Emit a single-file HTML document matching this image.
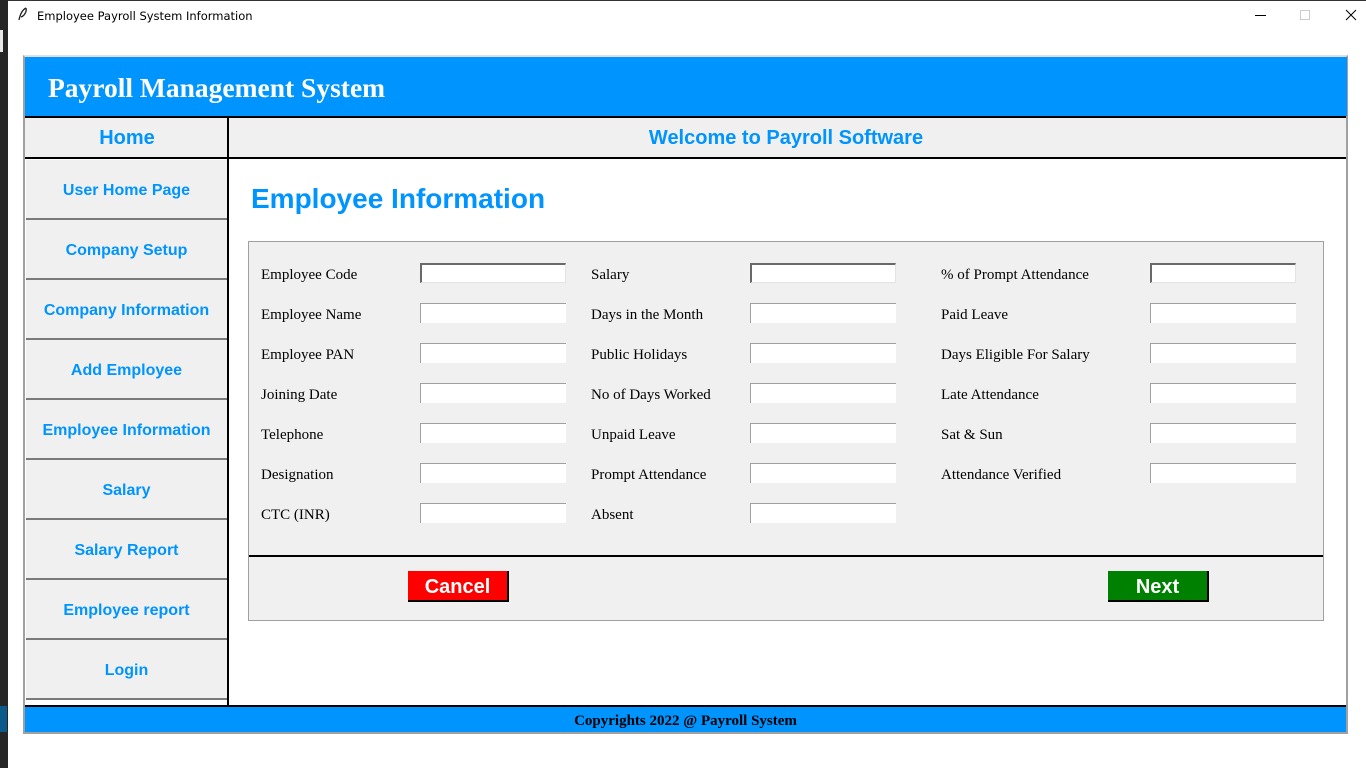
<!DOCTYPE html>
<html><head><meta charset="utf-8"><style>
*{margin:0;padding:0;box-sizing:border-box}
body{width:1366px;height:768px;position:relative;background:#fff;overflow:hidden;font-family:"Liberation Sans",Arial,sans-serif}
.a{position:absolute}
.lbl{position:absolute;font-family:"Liberation Serif",serif;font-size:15px;color:#000;line-height:18px}
.in{position:absolute;width:146px;height:20px;background:#fff;border-top:1px solid #a0a0a0;border-left:1px solid #a0a0a0}
.in.f{border-top:2px solid #696969;border-left:2px solid #696969;border-right:1px solid #e3e3e3;border-bottom:1px solid #e3e3e3}
.sb{position:absolute;left:26px;width:201px;height:60px;background:#f0f0f0;border-bottom:2px solid #7a7a7a;color:#0094ff;font-weight:bold;font-size:16px;text-align:center;line-height:62px}
.btn{position:absolute;width:101px;height:31px;color:#fff;font-weight:bold;font-size:20px;text-align:center;line-height:32px;border-right:2px solid #000;border-bottom:2px solid #000}
</style></head><body>
<div class="a" style="left:0;top:0;width:8px;height:768px;background:#262626"></div>
<div class="a" style="left:0;top:30px;width:3px;height:22px;background:#e8e8e8"></div>
<div class="a" style="left:0;top:706px;width:7px;height:26px;background:#0a5a8a"></div>
<div class="a" style="left:8px;top:0;width:1358px;height:1px;background:#333"></div>
<svg class="a" style="left:18px;top:7px" width="10" height="14" viewBox="0 0 10 14"><path d="M8 1 C4 3 2 8 1 13 M8 1 C9 5 6 9 3 10" stroke="#222" stroke-width="1.3" fill="none"/></svg>
<div class="a" style="left:37px;top:9px;color:#000;font-family:'DejaVu Sans','Liberation Sans',sans-serif;font-size:11.5px">Employee Payroll System Information</div>
<div class="a" style="left:1255px;top:15px;width:11px;height:1px;background:#000"></div>
<div class="a" style="left:1300px;top:10px;width:10px;height:10px;border:1px solid #ccc"></div>
<svg class="a" style="left:1345px;top:9px" width="12" height="12"><path d="M1 1L11 11M11 1L1 11" stroke="#000" stroke-width="1"/></svg>

<div class="a" style="left:23px;top:55px;width:1325px;height:679px;border:2px solid #a0a0a0;border-top-color:#e0e0e0;background:#fff"></div>
<div class="a" style="left:25px;top:57px;width:1322px;height:59px;background:#0094ff"></div>
<div class="a" style="left:48px;top:72px;font-family:'Liberation Serif',serif;font-weight:bold;font-size:27.5px;color:#fff">Payroll Management System</div>
<div class="a" style="left:25px;top:116px;width:1321px;height:2px;background:#000"></div>
<div class="a" style="left:25px;top:118px;width:1321px;height:40px;background:#f0f0f0"></div>
<div class="a" style="left:25px;top:157px;width:1321px;height:2px;background:#000"></div>
<div class="a" style="left:227px;top:116px;width:2px;height:591px;background:#000"></div>
<div class="a" style="left:25px;top:118px;width:204px;height:40px;color:#0094ff;font-weight:bold;font-size:20px;text-align:center;line-height:40px">Home</div>
<div class="a" style="left:229px;top:118px;width:1114px;height:40px;color:#0094ff;font-weight:bold;font-size:20px;text-align:center;line-height:40px">Welcome to Payroll Software</div>
<div class="a" style="left:25px;top:159px;width:202px;height:547px;background:#fff"></div>
<div class="a" style="left:225px;top:160px;width:2px;height:540px;background:#7a7a7a"></div>
<div class="sb" style="top:160px">User Home Page</div>
<div class="sb" style="top:220px">Company Setup</div>
<div class="sb" style="top:280px">Company Information</div>
<div class="sb" style="top:340px">Add Employee</div>
<div class="sb" style="top:400px">Employee Information</div>
<div class="sb" style="top:460px">Salary</div>
<div class="sb" style="top:520px">Salary Report</div>
<div class="sb" style="top:580px">Employee report</div>
<div class="sb" style="top:640px">Login</div>

<div class="a" style="left:251px;top:183px;color:#0094ff;font-weight:bold;font-size:28px">Employee Information</div>

<div class="a" style="left:248px;top:241px;width:1076px;height:380px;background:#f0f0f0;border:1px solid #a0a0a0"></div>
<div class="a" style="left:249px;top:555px;width:1074px;height:2px;background:#000"></div>

<div class="lbl" style="left:261px;top:266px">Employee Code</div>
<div class="lbl" style="left:261px;top:306px">Employee Name</div>
<div class="lbl" style="left:261px;top:346px">Employee PAN</div>
<div class="lbl" style="left:261px;top:386px">Joining Date</div>
<div class="lbl" style="left:261px;top:426px">Telephone</div>
<div class="lbl" style="left:261px;top:466px">Designation</div>
<div class="lbl" style="left:261px;top:506px">CTC (INR)</div>
<div class="lbl" style="left:591px;top:266px">Salary</div>
<div class="lbl" style="left:591px;top:306px">Days in the Month</div>
<div class="lbl" style="left:591px;top:346px">Public Holidays</div>
<div class="lbl" style="left:591px;top:386px">No of Days Worked</div>
<div class="lbl" style="left:591px;top:426px">Unpaid Leave</div>
<div class="lbl" style="left:591px;top:466px">Prompt Attendance</div>
<div class="lbl" style="left:591px;top:506px">Absent</div>
<div class="lbl" style="left:941px;top:266px">% of Prompt Attendance</div>
<div class="lbl" style="left:941px;top:306px">Paid Leave</div>
<div class="lbl" style="left:941px;top:346px">Days Eligible For Salary</div>
<div class="lbl" style="left:941px;top:386px">Late Attendance</div>
<div class="lbl" style="left:941px;top:426px">Sat &amp; Sun</div>
<div class="lbl" style="left:941px;top:466px">Attendance Verified</div>

<div class="in f" style="left:420px;top:263px"></div>
<div class="in" style="left:420px;top:303px"></div>
<div class="in" style="left:420px;top:343px"></div>
<div class="in" style="left:420px;top:383px"></div>
<div class="in" style="left:420px;top:423px"></div>
<div class="in" style="left:420px;top:463px"></div>
<div class="in" style="left:420px;top:503px"></div>
<div class="in f" style="left:750px;top:263px"></div>
<div class="in" style="left:750px;top:303px"></div>
<div class="in" style="left:750px;top:343px"></div>
<div class="in" style="left:750px;top:383px"></div>
<div class="in" style="left:750px;top:423px"></div>
<div class="in" style="left:750px;top:463px"></div>
<div class="in" style="left:750px;top:503px"></div>
<div class="in f" style="left:1150px;top:263px"></div>
<div class="in" style="left:1150px;top:303px"></div>
<div class="in" style="left:1150px;top:343px"></div>
<div class="in" style="left:1150px;top:383px"></div>
<div class="in" style="left:1150px;top:423px"></div>
<div class="in" style="left:1150px;top:463px"></div>

<div class="btn" style="left:408px;top:571px;background:#ff0000">Cancel</div>
<div class="btn" style="left:1108px;top:571px;background:#008000">Next</div>

<div class="a" style="left:25px;top:705px;width:1321px;height:2px;background:#000"></div>
<div class="a" style="left:25px;top:707px;width:1321px;height:25px;background:#0094ff"></div>
<div class="a" style="left:25px;top:713px;width:1321px;text-align:center;font-family:'Liberation Serif',serif;font-weight:bold;font-size:15px;color:#000">Copyrights 2022 @ Payroll System</div>
</body></html>
